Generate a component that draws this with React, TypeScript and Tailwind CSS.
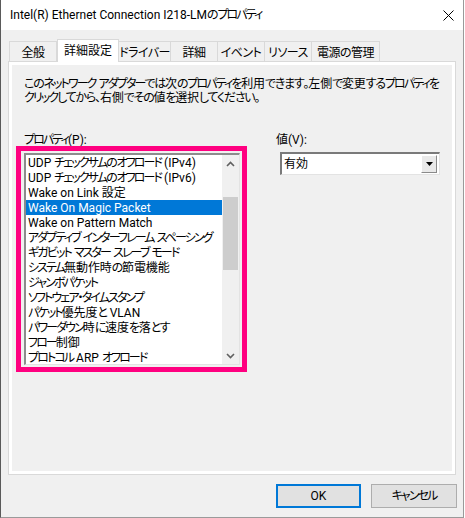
import React from 'react';

const FONT = "[font-family:Roboto,'Noto_Sans_CJK_JP',sans-serif] [font-feature-settings:'palt']";

const tabs = ['全般', '詳細設定', 'ドライバー', '詳細', 'イベント', 'リソース', '電源の管理'];
const tabWidths = [48, 62, 53, 48, 48, 48, 69];

const items = [
  'UDP チェックサムのオフロード (IPv4)',
  'UDP チェックサムのオフロード (IPv6)',
  'Wake on Link 設定',
  'Wake On Magic Packet',
  'Wake on Pattern Match',
  'アダプティブ インターフレーム スペーシング',
  'ギガビット マスター スレーブ モード',
  'システム無動作時の節電機能',
  'ジャンボパケット',
  'ソフトウェア・タイムスタンプ',
  'パケット優先度と VLAN',
  'パワーダウン時に速度を落とす',
  'フロー制御',
  'プロトコル ARP オフロード',
];

type Kind = 'kata' | 'hira' | 'kanji' | 'punct' | 'latin';

const kindOf = (ch: string): Kind => {
  const c = ch.charCodeAt(0);
  if (c >= 0x30a0 && c <= 0x30ff) return 'kata';
  if (c >= 0x3040 && c <= 0x309f) return 'hira';
  if (c >= 0x4e00 && c <= 0x9fff) return 'kanji';
  if ((c >= 0x3000 && c <= 0x303f) || (c >= 0xff00 && c <= 0xffef)) return 'punct';
  return 'latin';
};

const kindClass: Record<Kind, string> = {
  kata: 'tracking-[-1.9px]',
  hira: 'tracking-[-1.25px]',
  kanji: 'tracking-[-0.1px]',
  punct: 'tracking-[-1.2px]',
  latin: '',
};

// Japanese runs get tighter spacing so kana come out near Yu Gothic UI widths
function Jp({ text }: { text: string }) {
  const runs: { kind: Kind; s: string }[] = [];
  for (const ch of text) {
    const k = kindOf(ch);
    const last = runs[runs.length - 1];
    if (last && last.kind === k) last.s += ch;
    else runs.push({ kind: k, s: ch });
  }
  return (
    <>
      {runs.map((r, i) =>
        r.kind === 'latin' ? (
          <React.Fragment key={i}>{r.s}</React.Fragment>
        ) : (
          <span key={i} className={kindClass[r.kind]}>
            {r.s}
          </span>
        )
      )}
    </>
  );
}

function Chevron({ up }: { up?: boolean }) {
  return (
    <svg width="9" height="6" viewBox="0 0 9 6">
      <polyline
        points={up ? '1,5 4.5,1.5 8,5' : '1,1 4.5,4.5 8,1'}
        fill="none"
        stroke="#606060"
        strokeWidth="1.6"
      />
    </svg>
  );
}

export default function App() {
  return (
    <div className={`w-[464px] h-[518px] bg-[#f0f0f0] border-l border-r border-b border-l-[#5a5a5a] border-r-[#9a9a9a] border-b-[#9a9a9a] flex flex-col text-[12px] text-black ${FONT}`}>
      {/* Title bar */}
      <div className="h-[30px] bg-white flex items-center justify-between pl-[9px] pr-[9px] shrink-0">
        <span className="leading-[14px] whitespace-nowrap">
          <Jp text="Intel(R) Ethernet Connection I218-LMのプロパティ" />
        </span>
        <svg width="11" height="11" viewBox="0 0 11 11">
          <path d="M0.5 0.5 L10.5 10.5 M10.5 0.5 L0.5 10.5" stroke="#000" strokeWidth="1" />
        </svg>
      </div>

      <div className="flex-1 flex flex-col pl-[7px]">
        {/* Tabs */}
        <div className="h-[31px] flex items-end pl-[1px]">
          {tabs.map((t, i) =>
            i === 1 ? (
              <div
                key={t}
                style={{ width: tabWidths[i] }}
                className="h-[23px] -mb-[1px] bg-white border-t border-l border-r border-[#d9d9d9] flex items-center justify-center leading-[14px] whitespace-nowrap relative z-10"
              >
                {t}
              </div>
            ) : (
              <div
                key={t}
                style={{ width: tabWidths[i] }}
                className="h-[20px] bg-[#f0f0f0] border-t border-l border-r border-[#d9d9d9] -ml-px first:ml-0 flex items-center justify-center leading-[14px] whitespace-nowrap tracking-[-0.5px] pt-[2px]"
              >
                {t}
              </div>
            )
          )}
        </div>

        {/* Panel */}
        <div className="w-[448px] h-[414px] border border-[#d9d9d9] bg-white p-[3px]">
          <div className="h-full bg-[#f0f0f0] flex flex-col pl-[12px] pt-[12px]">
            <p className="leading-[14px] whitespace-nowrap">
              <Jp text="このネットワーク アダプターでは次のプロパティを利用できます。左側で変更するプロパティを" />
              <br />
              <Jp text="クリックしてから、右側でその値を選択してください。" />
            </p>

            <div className="flex mt-[28px] -ml-[8px]">
              {/* Left column */}
              <div className="flex flex-col">
                <div className="pl-[8px] leading-[14px] h-[13px] whitespace-nowrap">
                  <Jp text="プロパティ(P):" />
                </div>
                <div className="w-[231px] h-[226px] border-[5px] border-[#ff0080] pl-[3px] pt-[2px]">
                  <div className="w-[216px] h-[212px] bg-white border-t-2 border-l-2 border-t-[#8c8c8c] border-l-[#8c8c8c] border-r border-b border-r-[#e3e3e3] border-b-[#e3e3e3] flex overflow-hidden">
                    <div className="flex-1 min-w-0 overflow-hidden flex flex-col">
                      {items.map((it, i) => (
                        <div
                          key={it}
                          className={`h-[15px] shrink-0 flex items-center pl-[2px] whitespace-nowrap leading-[14px] ${
                            i === 3 ? 'bg-[#0078d7] text-white' : ''
                          }`}
                        >
                          <span>
                            <Jp text={it} />
                          </span>
                        </div>
                      ))}
                    </div>
                    <div className="w-[17px] bg-[#f0f0f0] flex flex-col shrink-0">
                      <div className="h-[17px] flex items-center justify-center">
                        <Chevron up />
                      </div>
                      <div className="h-[25px]" />
                      <div className="h-[73px] mx-[1px] bg-[#cdcdcd]" />
                      <div className="flex-1" />
                      <div className="h-[17px] flex items-center justify-center">
                        <Chevron />
                      </div>
                    </div>
                  </div>
                </div>
              </div>

              {/* Right column */}
              <div className="flex flex-col ml-[29px]">
                <div className="leading-[14px] h-[13px]">値(V):</div>
                <div className="ml-[4px] mt-[6px] w-[160px] h-[23px] bg-white border-t-2 border-l-2 border-t-[#7a7a7a] border-l-[#7a7a7a] border-r border-b border-r-[#e3e3e3] border-b-[#e3e3e3] flex items-center">
                  <span className="flex-1 pl-[2px] leading-[14px]">有効</span>
                  <div className="w-[16px] h-[18px] mr-[2px] bg-[#e9e9e9] border border-t-white border-l-white border-r-[#8a8a8a] border-b-[#8a8a8a] flex items-center justify-center">
                    <svg width="7" height="4" viewBox="0 0 7 4">
                      <polygon points="0,0 7,0 3.5,4" fill="#000" />
                    </svg>
                  </div>
                </div>
              </div>
            </div>
          </div>
        </div>

        {/* Buttons */}
        <div className="flex justify-end gap-[10px] mt-[9px] pr-[6px]">
          <button className="w-[85px] h-[24px] bg-[#e1e1e1] border-2 border-[#0078d7] leading-[14px]">OK</button>
          <button className="w-[86px] h-[24px] bg-[#e1e1e1] border border-[#adadad] leading-[14px]">
            <Jp text="キャンセル" />
          </button>
        </div>
      </div>
    </div>
  );
}
